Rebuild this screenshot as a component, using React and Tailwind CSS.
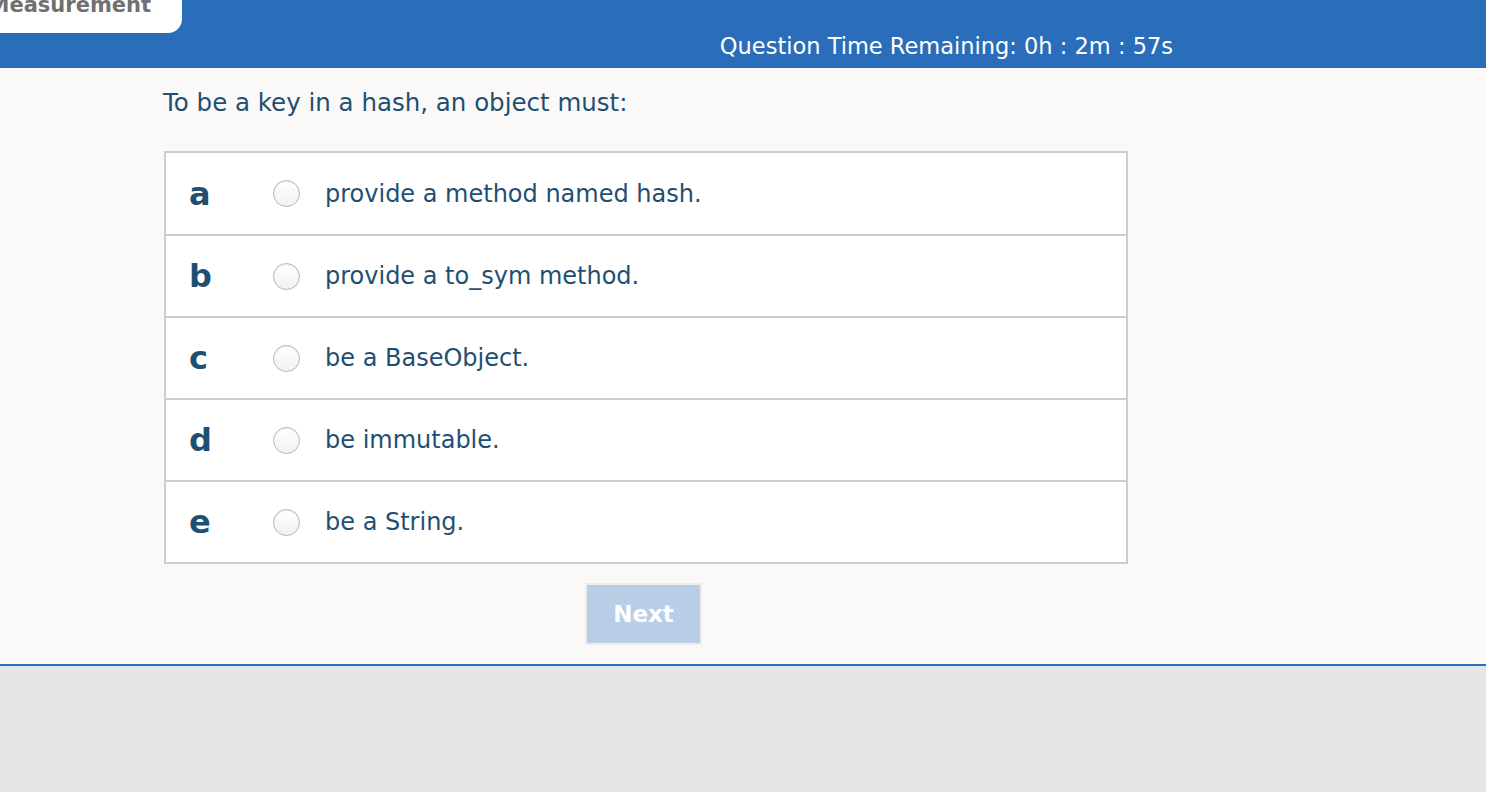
const options = [
  { key: 'a', text: 'provide a method named hash.' },
  { key: 'b', text: 'provide a to_sym method.' },
  { key: 'c', text: 'be a BaseObject.' },
  { key: 'd', text: 'be immutable.' },
  { key: 'e', text: 'be a String.' },
];

function App() {
  return (
    <div className="min-h-[792px] flex flex-col bg-[#e5e6e8]" style={{ fontFamily: '"DejaVu Sans", Verdana, sans-serif' }}>
      {/* top bar */}
      <div className="h-[68px] bg-[#2a6ebb] flex items-start justify-between">
        <div className="w-[182px] h-[33px] bg-white rounded-br-[14px] overflow-hidden flex items-end justify-end pr-[31px]">
          <span className="shrink-0 text-[21px] font-bold text-[#707070] leading-none mb-[17px] whitespace-nowrap">Measurement</span>
        </div>
        <div className="mt-[32px] mr-[313px] text-white text-[22.5px] leading-[28px] whitespace-nowrap">
          Question Time Remaining: 0h : 2m : 57s
        </div>
      </div>

      {/* question area */}
      <div className="bg-[#faf9f7] border-b-2 border-[#2a6ebb] pb-[19px]">
        <div className="w-[964px] ml-[164px]">
          <p className="text-[#1f4f72] text-[24.5px] leading-[30px] mt-[20px] -ml-px">To be a key in a hash, an object must:</p>

          <div className="mt-[33px] border-2 border-[#cdcdcd] bg-white">
            {options.map((opt, i) => (
              <div
                key={opt.key}
                className={`flex items-center ${i > 0 ? 'h-[82px] border-t-2 border-[#cdcdcd]' : 'h-[81px]'}`}
              >
                <span className="w-[107px] pl-[23px] text-[32px] leading-none font-bold text-[#1f4f72]">{opt.key}</span>
                <span className="w-[27px] h-[27px] rounded-full border border-[#b5b5b5] bg-gradient-to-b from-white to-[#f1f1f1] shadow-[inset_0_1px_1px_rgba(0,0,0,0.08)]" />
                <span className="ml-[25px] text-[24px] text-[#1f4f72]">{opt.text}</span>
              </div>
            ))}
          </div>

          <div className="flex mt-[19px] ml-[421px]">
            <button className="w-[117px] h-[62px] bg-[#b8cde6] border-2 border-[#ececec] text-white text-[23px] font-bold">
              Next
            </button>
          </div>
        </div>
      </div>

      <div className="flex-1" />
    </div>
  );
}

export default App;
